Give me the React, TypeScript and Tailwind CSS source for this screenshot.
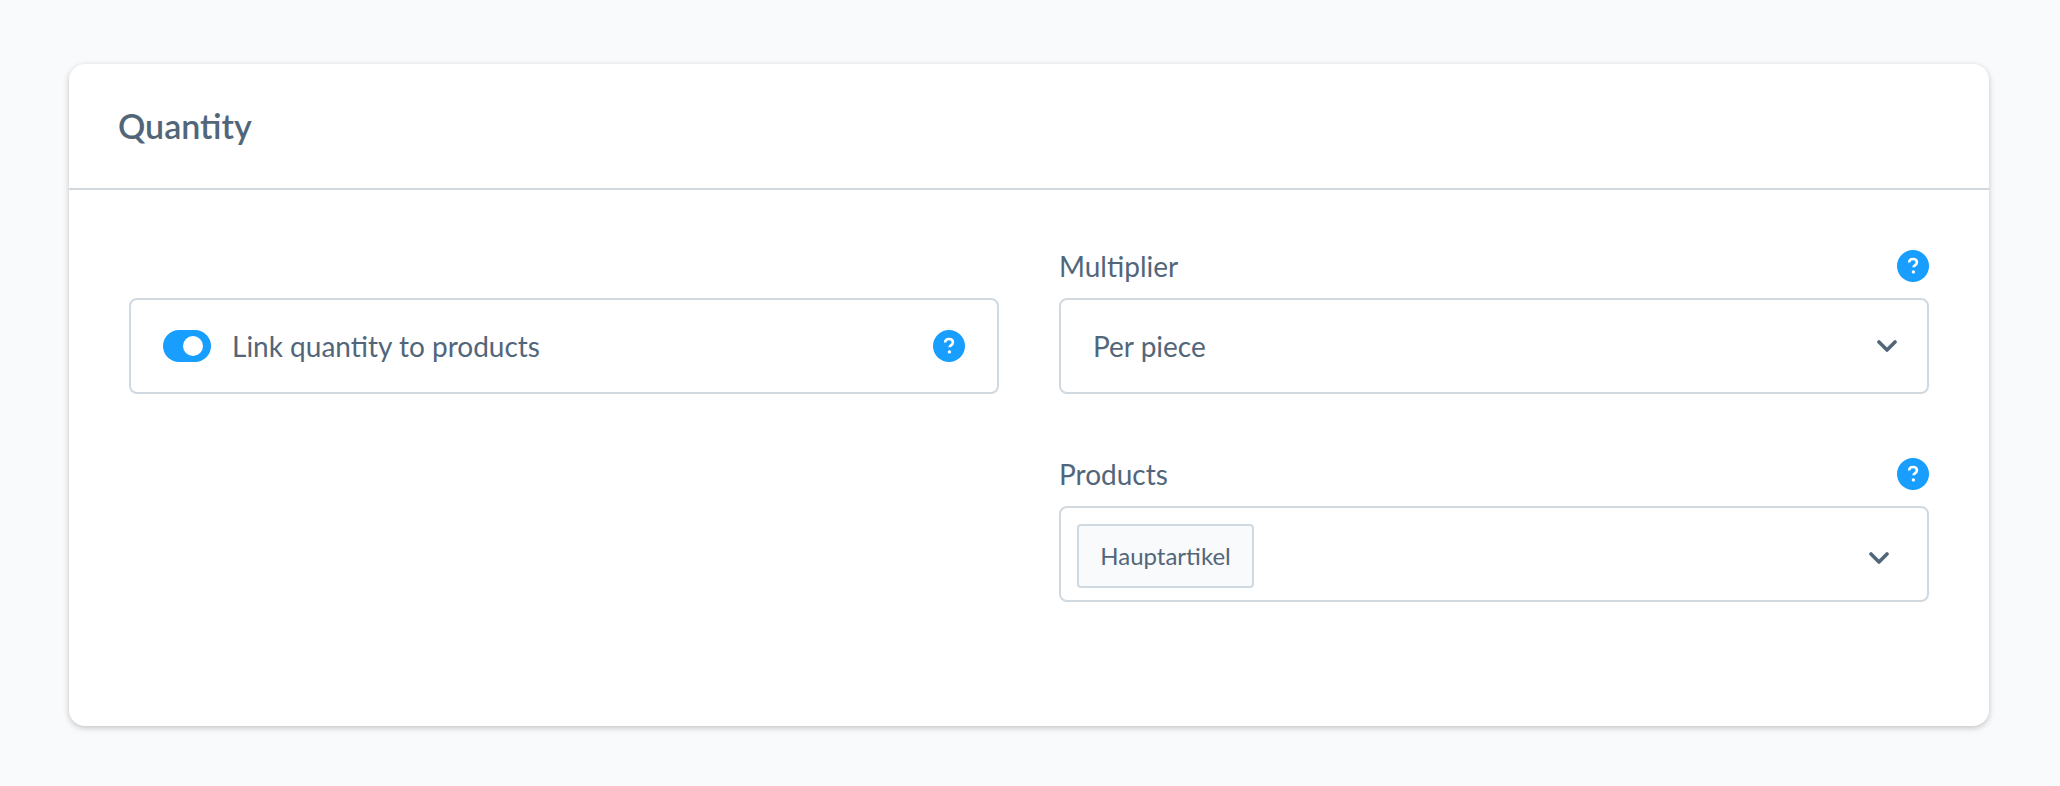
import React from "react";

function Help() {
  return (
    <svg width="32" height="32" viewBox="0 0 32 32" className="shrink-0 block">
      <circle cx="16" cy="16" r="16" fill="#189eff" />
      <path d="M12.2 12.6c0-2.2 1.7-3.6 3.9-3.6s3.8 1.3 3.8 3.3c0 1.6-.9 2.4-2 3.1-.9.6-1.4 1-1.4 1.9" fill="none" stroke="#fff" strokeWidth="2.6" />
      <circle cx="16.4" cy="21.9" r="1.7" fill="#fff" />
    </svg>
  );
}

function Chevron() {
  return (
    <svg width="20" height="12" viewBox="0 0 20 12" className="shrink-0 block">
      <path d="M2 2l8 8 8-8" fill="none" stroke="#52667a" strokeWidth="3.6" strokeLinecap="round" strokeLinejoin="round" />
    </svg>
  );
}

export default function App() {
  return (
    <div className="min-h-[786px] w-[2060px] bg-[#f9fafb] pt-[64px] pl-[69px] text-[#52667a] font-['Lato','Noto_Sans',sans-serif]">
      <div className="w-[1920px] h-[662px] bg-white rounded-[16px] shadow-[0_2px_6px_rgba(0,0,0,0.22)]">
        <div className="h-[126px] border-b-2 border-[#d1d9e0] pl-[49px] flex items-center">
          <h2 className="text-[34px] font-semibold leading-none">Quantity</h2>
        </div>
        <div className="pt-[60px] px-[60px] grid grid-cols-2 gap-x-[60px]">
          <div className="pt-[48px]">
            <div className="h-[96px] border-2 border-[#d1d9e0] rounded-[8px] pl-[32px] pr-[32px] flex items-center">
              <span className="relative w-[48px] h-[32px] rounded-full bg-[#189eff] shrink-0">
                <span className="absolute left-[20px] top-[6px] w-[20px] h-[20px] rounded-full bg-white" />
              </span>
              <span className="ml-[21px] text-[28px] flex-1">Link quantity to products</span>
              <Help />
            </div>
          </div>
          <div>
            <div className="flex items-center justify-between h-[32px] mb-[16px]">
              <span className="text-[28px]">Multiplier</span>
              <Help />
            </div>
            <div className="h-[96px] border-2 border-[#d1d9e0] rounded-[8px] pl-[32px] pr-[30px] flex items-center justify-between">
              <span className="text-[28px]">Per piece</span>
              <Chevron />
            </div>
            <div className="flex items-center justify-between h-[32px] mt-[64px] mb-[16px]">
              <span className="text-[28px]">Products</span>
              <Help />
            </div>
            <div className="h-[96px] border-2 border-[#d1d9e0] rounded-[8px] pl-[16px] pr-[38px] pt-[16px] flex items-start justify-between">
              <span className="h-[64px] w-[177px] border-2 border-[#d1d9e0] rounded-[4px] bg-[#f9fafb] flex items-center justify-center text-[24px]">Hauptartikel</span>
              <span className="mt-[28px]"><Chevron /></span>
            </div>
          </div>
        </div>
      </div>
    </div>
  );
}
